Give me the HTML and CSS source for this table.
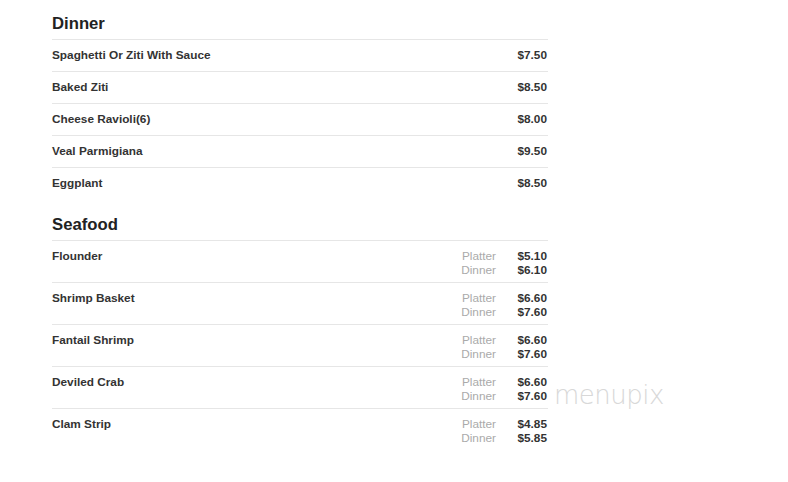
FILE: index.html
```html
<!DOCTYPE html>
<html>
<head>
<meta charset="utf-8">
<link rel="stylesheet" href="styles.css">
</head>
<body>
<div class="menu">
  <section class="section">
    <h2 class="heading">Dinner</h2>
    <div class="row"><span class="name">Spaghetti Or Ziti With Sauce</span><div class="prices"><div class="line"><span class="price">$7.50</span></div></div></div>
    <div class="row"><span class="name">Baked Ziti</span><div class="prices"><div class="line"><span class="price">$8.50</span></div></div></div>
    <div class="row"><span class="name">Cheese Ravioli(6)</span><div class="prices"><div class="line"><span class="price">$8.00</span></div></div></div>
    <div class="row"><span class="name">Veal Parmigiana</span><div class="prices"><div class="line"><span class="price">$9.50</span></div></div></div>
    <div class="row"><span class="name">Eggplant</span><div class="prices"><div class="line"><span class="price">$8.50</span></div></div></div>
  </section>
  <section class="section seafood">
    <h2 class="heading">Seafood</h2>
    <div class="row tall"><span class="name">Flounder</span><div class="prices"><div class="line"><span class="label">Platter</span><span class="price">$5.10</span></div><div class="line"><span class="label">Dinner</span><span class="price">$6.10</span></div></div></div>
    <div class="row tall"><span class="name">Shrimp Basket</span><div class="prices"><div class="line"><span class="label">Platter</span><span class="price">$6.60</span></div><div class="line"><span class="label">Dinner</span><span class="price">$7.60</span></div></div></div>
    <div class="row tall"><span class="name">Fantail Shrimp</span><div class="prices"><div class="line"><span class="label">Platter</span><span class="price">$6.60</span></div><div class="line"><span class="label">Dinner</span><span class="price">$7.60</span></div></div></div>
    <div class="row tall"><span class="name">Deviled Crab</span><div class="prices"><div class="line"><span class="label">Platter</span><span class="price">$6.60</span></div><div class="line"><span class="label">Dinner</span><span class="price">$7.60</span></div></div></div>
    <div class="row tall"><span class="name">Clam Strip</span><div class="prices"><div class="line"><span class="label">Platter</span><span class="price">$4.85</span></div><div class="line"><span class="label">Dinner</span><span class="price">$5.85</span></div></div></div>
  </section>
</div>
<div class="watermark">menupix</div>
</body>
</html>
```
FILE: styles.css
```css
html, body {
  margin: 0;
  padding: 0;
  background: #fff;
}
body {
  font-family: "Liberation Sans", Arial, sans-serif;
  color: #333;
  position: relative;
  width: 788px;
  height: 482px;
  overflow: hidden;
}
.menu {
  margin-left: 52px;
  width: 496px;
  padding-top: 14px;
}
.section {
  display: flex;
  flex-direction: column;
}
.seafood {
  margin-top: 16px;
}
.heading {
  margin: 0 0 5px 0;
  font-size: 16.7px;
  line-height: 20px;
  font-weight: bold;
  color: #222;
}
.row {
  display: flex;
  justify-content: space-between;
  align-items: flex-start;
  border-top: 1px solid #e6e6e6;
  padding: 8px 1px 9px 0;
  height: 14px;
  font-size: 11.8px;
  line-height: 14px;
}
.row.tall {
  height: 28px;
  padding-top: 8px;
  padding-bottom: 5px;
}
.name {
  font-weight: bold;
  color: #333;
}
.prices {
  display: flex;
  flex-direction: column;
}
.line {
  display: flex;
  justify-content: flex-end;
}
.label {
  color: #aaa;
  text-align: right;
}
.price {
  width: 51px;
  text-align: right;
  font-weight: bold;
  color: #333;
}
.watermark {
  position: absolute;
  left: 554px;
  top: 380px;
  font-family: "DejaVu Sans", sans-serif;
  font-weight: 200;
  font-size: 26px;
  letter-spacing: -0.5px;
  color: #d8d8d8;
  line-height: 30px;
}
```
